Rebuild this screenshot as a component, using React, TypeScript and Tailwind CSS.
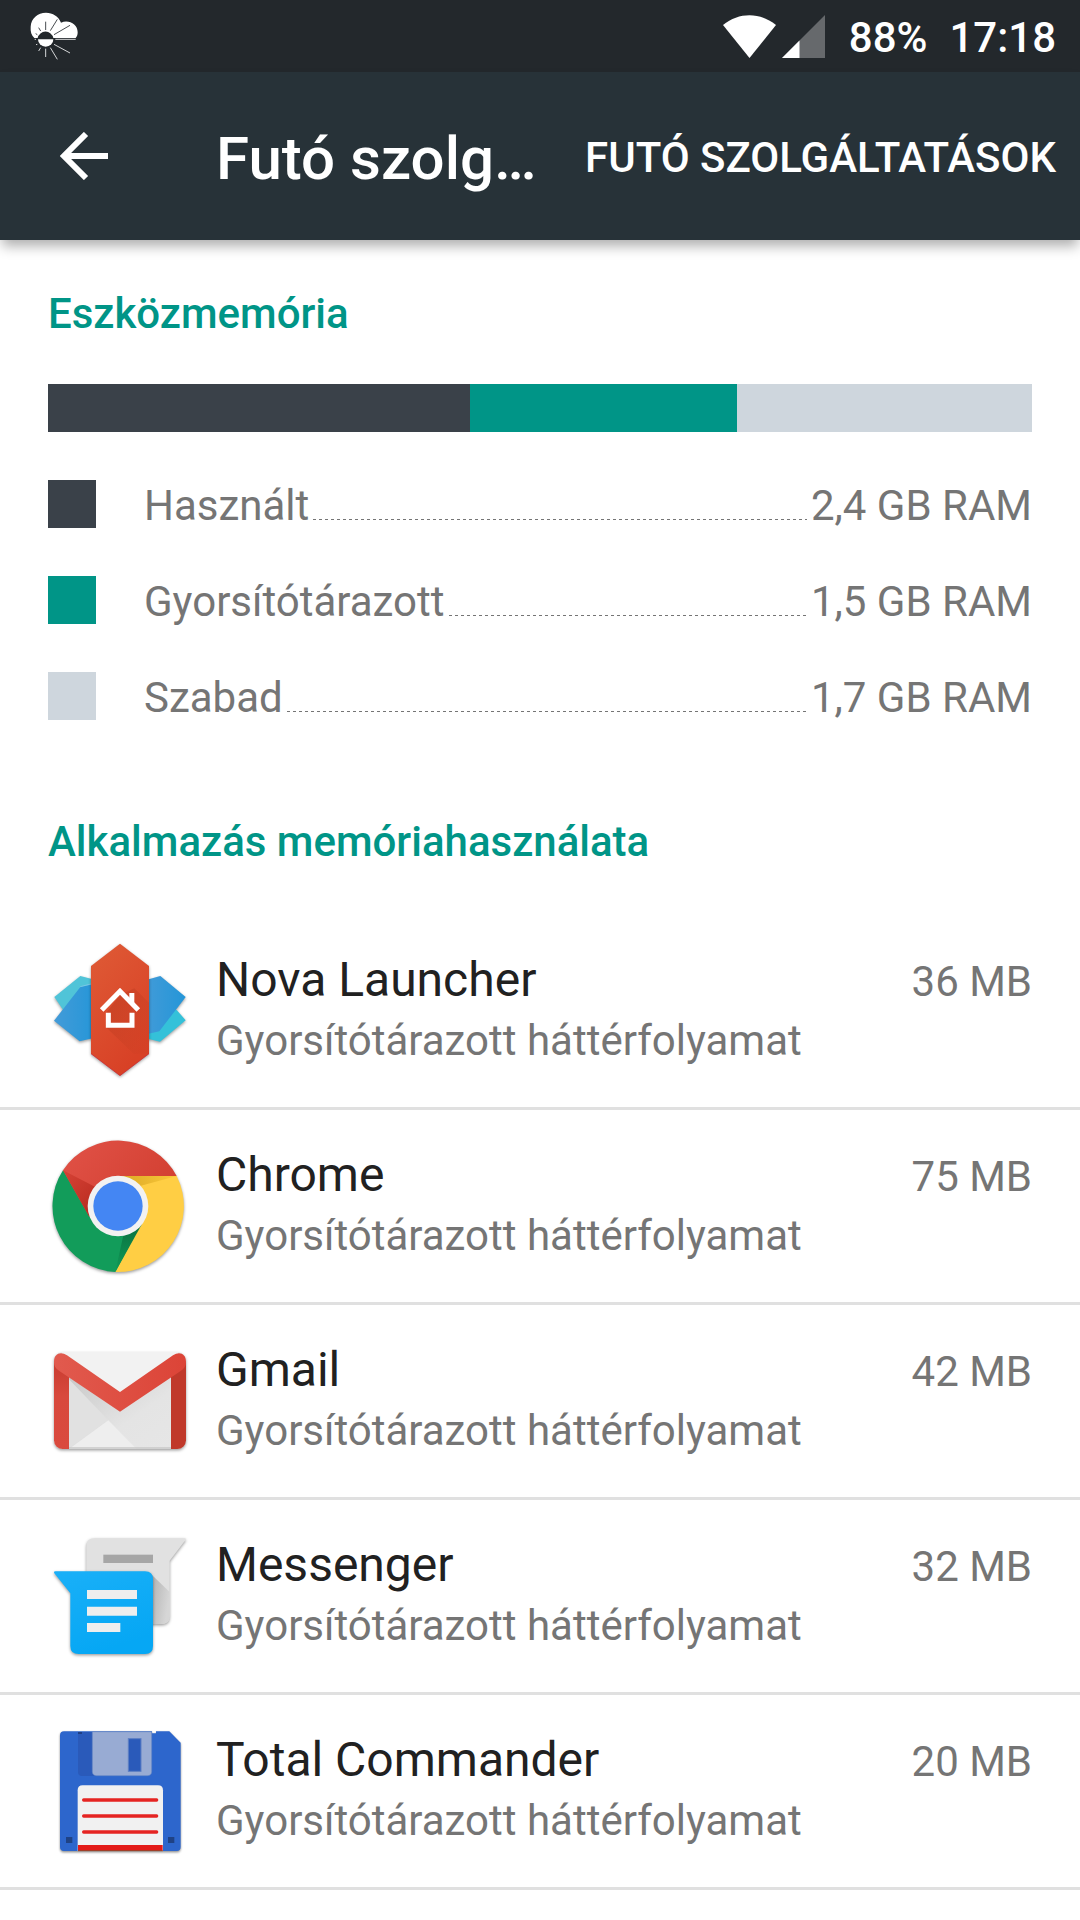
import type { ReactElement } from 'react';

const memory = [
  { label: 'Használt', value: '2,4 GB RAM', share: 422, color: 'bg-[#3a4149]' },
  { label: 'Gyorsítótárazott', value: '1,5 GB RAM', share: 267, color: 'bg-[#009587]' },
  { label: 'Szabad', value: '1,7 GB RAM', share: 295, color: 'bg-[#ced6dd]' },
];

const iconClass = 'size-36 shrink-0';
const shadowClass = 'drop-shadow-[0_4px_4px_rgba(0,0,0,0.4)]';

function WeatherIcon() {
  return (
    <svg className="h-12 w-12" viewBox="90 36 144 144" fill="none" aria-hidden="true">
      <path
        d="M103 114C94 105 91 95 92 80C93 55 113 38 138 38C158 38 176 49 183 68C206 58 233 72 233 97C233 104 231 110 227 114H160A24 24 0 0 0 113 114Z"
        fill="#fff"
      />
      <path d="M114 118A23 22 0 0 0 160 118Z" fill="#fff" />
      <path d="M137 90V65M151 92L172 58M162 104L210 76M122 93L116 83M112 104L107 101" stroke="#23282c" strokeWidth="2.5" />
      <path d="M166 118H227M162 133L210 159M151 143L172 178M137 146V171M122 143L116 153M112 133L108 134M108 118H104" stroke="#d5d7d8" strokeWidth="3" />
    </svg>
  );
}

function WifiIcon() {
  return (
    <svg className="h-[43px] w-[53px]" viewBox="0 0 53 43" aria-hidden="true">
      <path d="M0 10C16 -3 37 -3 53 10L26.500 43Z" fill="#fff" />
    </svg>
  );
}

function SignalIcon() {
  return (
    <svg className="h-[43px] w-[43px]" viewBox="0 0 43 43" aria-hidden="true">
      <path d="M43 0V43H0Z" fill="#66696c" />
      <path d="M17.500 25.500V43H0Z" fill="#fff" />
    </svg>
  );
}

function NovaIcon() {
  return (
    <svg className={iconClass} viewBox="54 57 432 432" aria-hidden="true">
      <defs>
        <linearGradient id="novaRed" x1="0" y1="0" x2="0.5" y2="1">
          <stop offset="0" stopColor="#df5b36" />
          <stop offset="1" stopColor="#d84126" />
        </linearGradient>
        <linearGradient id="novaShade" x1="0" y1="0" x2="1" y2="1">
          <stop offset="0" stopColor="#b83a1f" />
          <stop offset="1" stopColor="#c93e22" stopOpacity="0.2" />
        </linearGradient>
        <linearGradient id="novaBlue" x1="0" y1="0" x2="1" y2="0">
          <stop offset="0" stopColor="#439bd8" />
          <stop offset="1" stopColor="#2496d8" />
        </linearGradient>
      </defs>
      <g className={shadowClass}>
        <path d="M73 231L151 168L200 181V300H120Z" fill="#50c4d8" />
        <path d="M340 250L440 270L467 301L390 365L345 354Z" fill="#34c1d9" />
        <path d="M72 302L151 201L200 190V352L149 364Z" fill="url(#novaBlue)" />
        <path d="M340 182L391 168L467 231L388 334L340 345Z" fill="url(#novaBlue)" />
      </g>
      <path d="M151 200L183 192" stroke="#8fc9ec" strokeWidth="2" />
      <g className={shadowClass}>
        <path d="M183 138L270 71L357 138V401L270 467L183 401Z" fill="url(#novaRed)" />
      </g>
      <path d="M313 205L357 248V401L311 401L228 322V279L270 226Z" fill="url(#novaShade)" opacity="0.6" />
      <path d="M183 401L270 467L357 401" fill="none" stroke="#cc2433" strokeWidth="2" />
      <path d="M215 270L270 214L325 270" fill="none" stroke="#fff" strokeWidth="15" />
      <path d="M298 219H313V252L298 238Z" fill="#fff" />
      <path d="M235 278V316H306V278" fill="none" stroke="#fff" strokeWidth="15" />
    </svg>
  );
}

function ChromeIcon() {
  return (
    <svg className={iconClass} viewBox="54 42 432 432" aria-hidden="true">
      <defs>
        <linearGradient id="chromeRed" x1="0" y1="0" x2="1" y2="0.6">
          <stop offset="0" stopColor="#e15247" />
          <stop offset="1" stopColor="#d23f31" />
        </linearGradient>
        <linearGradient id="chromeRedShade" x1="0" y1="0" x2="0.8" y2="1">
          <stop offset="0" stopColor="#d64336" />
          <stop offset="1" stopColor="#b92b20" />
        </linearGradient>
        <linearGradient id="chromeYellowShade" x1="0" y1="0" x2="1" y2="0">
          <stop offset="0" stopColor="#dba824" />
          <stop offset="1" stopColor="#fac83a" />
        </linearGradient>
        <linearGradient id="chromeGreenShade" x1="0" y1="0" x2="0" y2="1">
          <stop offset="0" stopColor="#0a7040" />
          <stop offset="1" stopColor="#109b57" />
        </linearGradient>
      </defs>
      <g className={shadowClass}>
        <path d="M440 168A198 198 0 0 1 256 456L264 168Z" fill="#ffce44" />
        <path d="M99 151A198 198 0 0 0 256 456L336 306L264 258Z" fill="#129c5a" />
        <path d="M99 151A198 198 0 0 1 440 168H264V258L178 290Z" fill="url(#chromeRed)" />
      </g>
      <path d="M99 151L178 290C175 245 182 220 202 204Z" fill="url(#chromeRedShade)" />
      <path d="M264 168H440L330 198Z" fill="url(#chromeYellowShade)" />
      <path d="M336 312L256 456L280 346Z" fill="url(#chromeGreenShade)" />
      <circle cx="264" cy="258" r="91" fill="#f2f2f2" />
      <circle cx="264" cy="258" r="74" fill="#4486f3" />
    </svg>
  );
}

function GmailIcon() {
  return (
    <svg className={iconClass} viewBox="54 27 432 432" aria-hidden="true">
      <defs>
        <linearGradient id="gmailSide" x1="0" y1="0" x2="0" y2="1">
          <stop offset="0" stopColor="#c83c30" />
          <stop offset="0.4" stopColor="#d8493d" />
          <stop offset="1" stopColor="#da4a3e" />
        </linearGradient>
        <linearGradient id="gmailFold" x1="0" y1="0" x2="1" y2="0">
          <stop offset="0" stopColor="#e15a4e" />
          <stop offset="1" stopColor="#dc4437" />
        </linearGradient>
        <linearGradient id="gmailPaper" x1="0" y1="0" x2="1" y2="1">
          <stop offset="0" stopColor="#c9c9c9" />
          <stop offset="0.6" stopColor="#e4e4e4" />
          <stop offset="1" stopColor="#e6e6e6" />
        </linearGradient>
      </defs>
      <g className={shadowClass}>
        <rect x="72" y="97" width="396" height="290" rx="26" fill="#e2e2e2" />
      </g>
      <path d="M95 96H445V190L270 270L95 190Z" fill="#f2f2f2" />
      <path d="M117 170L270 275L423 170V387H117Z" fill="url(#gmailPaper)" />
      <path d="M117 178L235 301L117 385Z" fill="#e1e1e1" />
      <path d="M117 387L235 301L320 387Z" fill="#eee" />
      <path d="M117 384H423" stroke="#c8c8c8" strokeWidth="4" />
      <path d="M72 125L117 165V387H98A26 26 0 0 1 72 361Z" fill="url(#gmailSide)" />
      <path d="M468 125L423 165V387H442A26 26 0 0 0 468 361Z" fill="#c0392b" />
      <path
        d="M72 125C72 101 92 93 111 106L270 216L429 106C448 93 468 101 468 125C468 138 463 145 453 152L270 275L87 152C77 145 72 138 72 125Z"
        fill="url(#gmailFold)"
      />
    </svg>
  );
}

function MessengerIcon() {
  return (
    <svg className={iconClass} viewBox="54 42 432 432" aria-hidden="true">
      <defs>
        <linearGradient id="msgShade" x1="0" y1="0" x2="1" y2="0.4">
          <stop offset="0" stopColor="#b0b0b0" />
          <stop offset="1" stopColor="#d6d6d6" />
        </linearGradient>
        <linearGradient id="msgBlue" x1="0" y1="0" x2="0.4" y2="1">
          <stop offset="0" stopColor="#1ab0f8" />
          <stop offset="1" stopColor="#06a7f4" />
        </linearGradient>
      </defs>
      <g className={shadowClass}>
        <path d="M194 85H464Q470 85 466 91L419 152V318Q419 342 394 342H169V110Q169 85 194 85Z" fill="#e1e1e1" />
      </g>
      <path d="M362 191L419 246V318Q419 342 394 342H362Z" fill="url(#msgShade)" />
      <rect x="220" y="134" width="149" height="25" fill="#a6a6a6" />
      <g className={shadowClass}>
        <path d="M76 184H345Q369 184 369 208V408Q369 432 345 432H146Q121 432 121 408V250L73 190Q70 184 76 184Z" fill="url(#msgBlue)" />
      </g>
      <path d="M171 240H321V267H171ZM171 290H321V317H171ZM171 339H271V366H171Z" fill="#eee" />
    </svg>
  );
}

function TotalCommanderIcon() {
  return (
    <svg className={iconClass} viewBox="54 27 432 432" aria-hidden="true">
      <g className="drop-shadow-[0_4px_3px_rgba(0,0,0,0.45)]">
        <path d="M102 64H366V70H378V64H418L452 98V411Q452 423 440 423H102Q90 423 90 411V76Q90 64 102 64Z" fill="#2d66cc" />
      </g>
      <path d="M144 66H195V198H156Q144 198 144 186Z" fill="#2a5aba" />
      <rect x="144" y="66" width="12" height="6" fill="#1e3f85" />
      <path d="M187 65H365V184Q365 197 352 197H200Q187 197 187 184Z" fill="#98abd3" stroke="#6688c4" strokeWidth="2" />
      <rect x="295" y="86" width="38" height="98" fill="#2a5aba" stroke="#5d7fc4" strokeWidth="3" />
      <path d="M143 423V241Q143 226 158 226H384Q399 226 399 241V423Z" fill="#f1f1f1" />
      <path d="M161 270H380M161 318H380M161 366H380" stroke="#e52422" strokeWidth="10" strokeLinecap="round" />
      <rect x="144" y="405" width="254" height="18" fill="#e31b18" />
      <path d="M144 422H398" stroke="#93472e" strokeWidth="3" />
      <rect x="108" y="381" width="19" height="18" fill="#1f4285" />
      <rect x="414" y="381" width="19" height="18" fill="#1f4285" />
    </svg>
  );
}

const apps: { name: string; size: string; icon: ReactElement }[] = [
  { name: 'Nova Launcher', size: '36 MB', icon: <NovaIcon /> },
  { name: 'Chrome', size: '75 MB', icon: <ChromeIcon /> },
  { name: 'Gmail', size: '42 MB', icon: <GmailIcon /> },
  { name: 'Messenger', size: '32 MB', icon: <MessengerIcon /> },
  { name: 'Total Commander', size: '20 MB', icon: <TotalCommanderIcon /> },
];

export default function App() {
  return (
    <div className="min-h-screen bg-white font-[Roboto,sans-serif] text-[42px] text-[#757575]">
      <div className="flex h-[72px] items-center justify-between bg-[#23282c] pr-6 pl-[30px] font-medium text-white">
        <WeatherIcon />
        <div className="flex items-center">
          <WifiIcon />
          <div className="ml-1.5">
            <SignalIcon />
          </div>
          <span className="ml-6 pt-1 leading-[50px]">88%</span>
          <time className="ml-[22px] pt-1 leading-[50px]">17:18</time>
        </div>
      </div>

      <header className="flex h-[168px] items-center justify-between bg-[#273238] pr-6 font-medium text-white shadow-[0_8px_12px_-2px_rgba(0,0,0,0.32)]">
        <div className="flex h-full items-center">
          <button type="button" aria-label="Vissza" className="flex h-full w-[168px] shrink-0 items-center pl-[60px]">
            <svg className="size-12" viewBox="0 0 48 48" fill="none" stroke="#fff" strokeWidth="6" aria-hidden="true">
              <path d="M48 24H6M26 2L4 24L26 46" />
            </svg>
          </button>
          <h1 className="ml-12 pt-1.5 text-[60px] leading-[72px] whitespace-nowrap">Futó szolg…</h1>
        </div>
        <button type="button" className="shrink-0 pt-1 leading-[50px] font-medium uppercase">
          Futó szolgáltatások
        </button>
      </header>

      <main>
        <section className="px-12 pt-[49px]">
          <h2 className="leading-[50px] font-medium text-[#009587]">Eszközmemória</h2>
          <div className="mt-[45px] flex h-12">
            {memory.map((m) => (
              <div key={m.label} className={m.color} style={{ flexGrow: m.share, flexBasis: 0 }} />
            ))}
          </div>
          <dl className="mt-12 flex flex-col gap-12">
            {memory.map((m) => (
              <div key={m.label} className="flex h-12 items-center">
                <span className={`size-12 shrink-0 ${m.color}`} />
                <dt className="ml-12 pt-1 leading-[50px]">{m.label}</dt>
                <span className="mx-1 mb-2 h-px flex-1 self-end bg-[repeating-linear-gradient(90deg,#757575_0_3px,transparent_3px_6px)]" />
                <dd className="pt-1 leading-[50px]">{m.value}</dd>
              </div>
            ))}
          </dl>
        </section>

        <section className="pt-[97px]">
          <h2 className="px-12 leading-[50px] font-medium text-[#009587]">Alkalmazás memóriahasználata</h2>
          <ul className="mt-12">
            {apps.map((app) => (
              <li key={app.name} className="border-b-[3px] border-[#e0e0e0]">
                <button type="button" className="flex h-48 w-full items-center gap-6 px-12 text-left">
                  {app.icon}
                  <span className="flex min-w-0 flex-1 flex-col pb-0.5">
                    <span className="flex items-baseline justify-between leading-[60px]">
                      <span className="text-[48px] text-[#212121]">{app.name}</span>
                      <span>{app.size}</span>
                    </span>
                    <span className="truncate leading-[58px]">Gyorsítótárazott háttérfolyamat</span>
                  </span>
                </button>
              </li>
            ))}
          </ul>
        </section>
      </main>
    </div>
  );
}
